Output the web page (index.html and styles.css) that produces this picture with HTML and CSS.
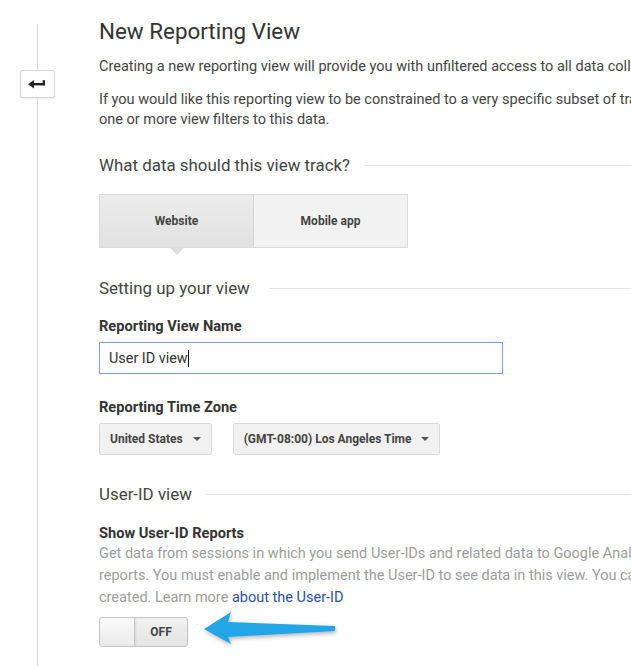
FILE: index.html
```html
<!DOCTYPE html>
<html lang="en">
<head>
<meta charset="utf-8">
<title>New Reporting View</title>
<link rel="stylesheet" href="styles.css">
</head>
<body>
<div class="page">
  <aside class="rail">
    <div class="rail-line rail-line-top"></div>
    <button class="back-btn" type="button" aria-label="Back">
      <svg class="back-icon" width="18" height="10" viewBox="0 0 18 10">
        <polygon points="0,5.2 6,1 6,9.4" fill="#222"/>
        <rect x="5" y="4" width="12" height="2.4" fill="#222"/>
        <rect x="14.6" y="1.2" width="2.4" height="5.2" fill="#222"/>
      </svg>
    </button>
    <div class="rail-line rail-line-fill"></div>
  </aside>

  <main class="content">
    <h1 class="title">New Reporting View</h1>
    <p class="intro">Creating a new reporting view will provide you with unfiltered access to all data collected for this property.</p>
    <p class="intro intro-second">If you would like this reporting view to be constrained to a very specific subset of traffic, you can apply<br>one or more view filters to this data.</p>

    <div class="section-head section-track">
      <h2 class="section-title">What data should this view track?</h2>
      <span class="rule"></span>
    </div>

    <div class="tabs">
      <div class="tab tab-active">Website</div>
      <div class="tab tab-other">Mobile app</div>
    </div>

    <div class="section-head section-setup">
      <h2 class="section-title">Setting up your view</h2>
      <span class="rule"></span>
    </div>

    <div class="field-label label-name">Reporting View Name</div>
    <div class="text-input"><span class="input-value">User ID view</span><span class="caret"></span></div>

    <div class="field-label label-zone">Reporting Time Zone</div>
    <div class="dropdowns">
      <div class="dropdown">United States<span class="dd-caret"></span></div>
      <div class="dropdown">(GMT-08:00) Los Angeles Time<span class="dd-caret"></span></div>
    </div>

    <div class="section-head section-userid">
      <h2 class="section-title">User-ID view</h2>
      <span class="rule"></span>
    </div>

    <div class="field-label label-show">Show User-ID Reports</div>
    <p class="desc">Get data from sessions in which you send User-IDs and related data to Google Analytics in special User-ID<br>reports. You must enable and implement the User-ID to see data in this view. You can't turn this setting off once the view is<br>created. Learn more <a class="link" href="#">about the User-ID</a></p>

    <div class="toggle-row">
      <div class="toggle">
        <span class="knob"></span>
        <span class="toggle-text">OFF</span>
      </div>
      <svg class="pointer-arrow" width="140" height="30" viewBox="0 0 140 30">
        <polygon points="5,12 32,-5 29,5 136,9 136,14 29,20 32,27" fill="#22a6e8"/>
      </svg>
    </div>
  </main>
</div>
</body>
</html>
```

FILE: styles.css
```css
* {
  box-sizing: border-box;
}

html, body {
  margin: 0;
  padding: 0;
  background: #fff;
  overflow: hidden;
}

body {
  font-family: Roboto, "Liberation Sans", Arial, sans-serif;
  color: #444;
}

.page {
  display: flex;
  min-height: 100vh;
}

.rail {
  width: 74px;
  flex: 0 0 74px;
  display: flex;
  flex-direction: column;
  align-items: center;
  padding-top: 24px;
}

.rail-line {
  width: 1px;
  background: #d9d9d9;
}

.rail-line-top {
  height: 46px;
}

.rail-line-fill {
  flex: 1;
}

.back-btn {
  width: 35px;
  height: 28px;
  padding: 0;
  margin: 0;
  background: #fff;
  border: 1px solid #d6d6d6;
  border-radius: 2px;
  box-shadow: 0 1px 1px rgba(0, 0, 0, 0.06);
  display: flex;
  align-items: center;
  justify-content: center;
}

.back-icon {
  display: block;
  margin-right: 1px;
}

.content {
  margin-left: 25px;
  width: 780px;
  flex: 0 0 780px;
  padding-top: 17px;
}

.title {
  margin: 0;
  font-size: 22.4px;
  line-height: 28px;
  font-weight: 400;
  color: #333;
}

.intro {
  margin: 12px 0 0;
  font-size: 14.5px;
  line-height: 20px;
  color: #444;
  white-space: nowrap;
}

.intro-second {
  margin-top: 13px;
}

.section-head {
  display: flex;
  align-items: center;
}

.section-title {
  margin: 0;
  font-size: 16.9px;
  line-height: 24px;
  font-weight: 400;
  color: #444;
  white-space: nowrap;
}

.rule {
  flex: 1;
  height: 1px;
  background: #e6e6e6;
  margin-left: 14px;
}

.section-track {
  margin-top: 23px;
}

.section-setup {
  margin-top: 28px;
}

.section-setup .rule {
  margin-left: 19px;
}

.section-userid {
  margin-top: 27px;
}

.tabs {
  margin-top: 17px;
  width: 309px;
  height: 54px;
  display: flex;
  border: 1px solid #dcdcdc;
}

.tab {
  flex: 1;
  display: flex;
  align-items: center;
  justify-content: center;
  font-size: 12px;
  font-weight: 700;
  color: #444;
}

.tab-active {
  position: relative;
  background: linear-gradient(#ececec, #e1e1e1);
}

.tab-active::after {
  content: "";
  position: absolute;
  left: 50%;
  bottom: -8px;
  transform: translateX(-50%);
  border-left: 7px solid transparent;
  border-right: 7px solid transparent;
  border-top: 7px solid #dedede;
}

.tab-other {
  background: #f2f2f2;
  border-left: 1px solid #d6d6d6;
}

.field-label {
  font-size: 14.6px;
  line-height: 20px;
  font-weight: 700;
  color: #333;
}

.label-name {
  margin-top: 16px;
}

.label-zone {
  margin-top: 23px;
}

.label-show {
  margin-top: 17px;
}

.text-input {
  margin-top: 6px;
  width: 404px;
  height: 32px;
  border: 1px solid #7f9fd8;
  padding-left: 9px;
  display: flex;
  align-items: center;
  font-size: 14.4px;
  color: #333;
}

.caret {
  display: inline-block;
  width: 1px;
  height: 17px;
  background: #111;
  margin-left: 0;
}

.dropdowns {
  margin-top: 6px;
  display: flex;
  gap: 21px;
}

.dropdown {
  height: 32px;
  padding: 0 10px;
  display: flex;
  align-items: center;
  background: #f1f1f1;
  border: 1px solid #dadada;
  border-radius: 2px;
  font-size: 12px;
  font-weight: 700;
  color: #444;
  white-space: nowrap;
}

.dd-caret {
  display: inline-block;
  margin-left: 10px;
  border-left: 4px solid transparent;
  border-right: 4px solid transparent;
  border-top: 4px solid #555;
}

.desc {
  margin: 0;
  font-size: 14.5px;
  line-height: 22px;
  color: #9c9c9c;
  white-space: nowrap;
}

.link {
  color: #2a4fa5;
  text-decoration: none;
}

.toggle-row {
  margin-top: 8px;
  display: flex;
  align-items: flex-start;
}

.toggle {
  width: 89px;
  height: 30px;
  display: flex;
  border: 1px solid #c4c4c4;
  border-radius: 3px;
  background: linear-gradient(#f2f2f2, #e4e4e4);
  overflow: hidden;
}

.knob {
  width: 35px;
  height: 100%;
  background: linear-gradient(#fbfbfb, #eaeaea);
  border-right: 1px solid #c4c4c4;
  box-shadow: 1px 0 2px rgba(0, 0, 0, 0.08);
}

.toggle-text {
  flex: 1;
  display: flex;
  align-items: center;
  justify-content: center;
  font-size: 12px;
  font-weight: 700;
  color: #444;
}

.pointer-arrow {
  display: block;
  margin-left: 11px;
  overflow: visible;
  filter: drop-shadow(1px 2px 2px rgba(0, 0, 0, 0.3));
}
```
